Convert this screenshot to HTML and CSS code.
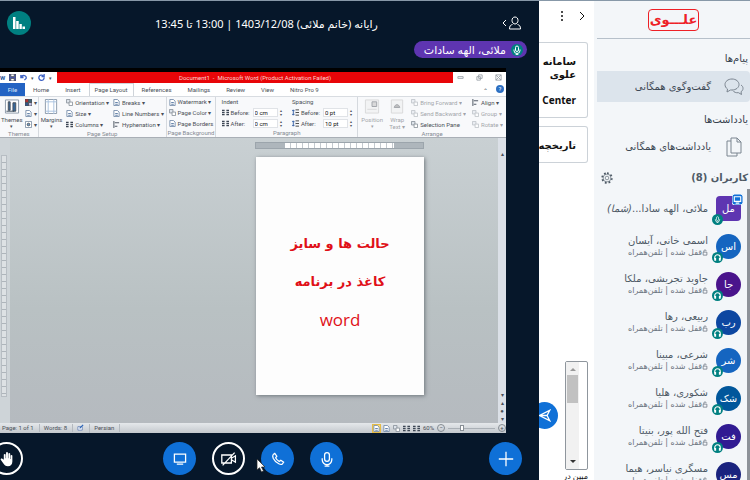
FILE: index.html
```
<!DOCTYPE html>
<html lang="fa" dir="rtl">
<head>
  <meta charset="UTF-8" />
  <title>رایانه (خانم ملائی)</title>
  <meta name="viewport" content="width=device-width, initial-scale=1.0" />
  <link rel="stylesheet" href="styles.css">
</head>
<body>
  <!-- shared icons -->
  <svg class="defs" aria-hidden="true">
    <symbol id="headset" viewBox="0 0 12 12"><path d="M3 8V6a3 3 0 0 1 6 0v2" fill="none" stroke="#fff" stroke-width="1.200"/><path d="M2.500 6.500h2V9.500h-2zM7.500 6.500h2V9.500h-2z" fill="#fff" stroke="none"/></symbol>
    <symbol id="mic" viewBox="0 0 20 20"><rect x="7" y="2" width="6" height="11" rx="3"/><path d="M4 9v2a6 6 0 0 0 12 0V9M10 17v2M7 19h6"/></symbol>
    <symbol id="doc" viewBox="0 0 8 8"><path d="M1 .5h4l2 2v5H1z" fill="#fff" stroke="#7189a8"/><path d="M2.500 4h3M2.500 6h3" stroke="#52749f"/></symbol>
    <symbol id="lines" viewBox="0 0 8 8"><path d="M0 1.500h3M0 4h3M0 6.500h3M5 1.500h3M5 4h3M5 6.500h3" stroke="#3c4654" stroke-width="1.500"/></symbol>
    <symbol id="para" viewBox="0 0 8 8"><path d="M1.500 1v6M0 2.500 1.500 1 3 2.500M0 5.500 1.500 7 3 5.500" fill="none" stroke="#2c58a0"/><path d="M4 1h4M4 4h4M4 7h4" stroke="#333"/></symbol>
    <symbol id="layers" viewBox="0 0 8 8"><path d="M.5.5h4v4h-4z" fill="#dde3ea" stroke="#8a929c"/><path d="M3.500 3.500h4v4h-4z" fill="#fff" stroke="#8a929c"/></symbol>
    <symbol id="align" viewBox="0 0 8 8"><path d="M1 0v8M2 2h5M2 6h3" fill="none" stroke="#3c4654"/></symbol>
    <symbol id="lock" viewBox="0 0 8 8"><path d="M1.500 3.500h5v4h-5zM2.500 3.500V2a1.500 1.500 0 0 1 3 0" fill="none" stroke="#6b7480"/></symbol>
  </svg>

  <div class="app">
    <aside class="users-panel">
      <div class="brand"><span class="logo">علـــوی</span></div>

      <h2>پیام‌ها</h2>
      <button class="nav-item active">
        <svg viewBox="0 0 20 20"><path d="M8 2c-4 0-7 2.500-7 5.500 0 2 1 3.500 2.500 4.500L3 15l3.500-2H8c4 0 7-2.500 7-5.500S12 2 8 2z"/><path d="M17 8c1.500 1 2 2 2 3.500s-.8 2.500-2 3.200l.5 2.800-3-1.800c-2.500.3-4.500-.5-5.500-2"/></svg>
        <span>گفت‌وگوی همگانی</span>
      </button>

      <h2>یادداشت‌ها</h2>
      <button class="nav-item">
        <svg viewBox="0 0 20 20"><path d="M7 1h6l4 4v11H7zM13 1v4h4M7 4H3v15h10v-3"/></svg>
        <span>یادداشت‌های همگانی</span>
      </button>

      <div class="users-head">
        <h2>کاربران (8)</h2>
        <button class="icon-btn" aria-label="تنظیمات کاربران">
          <svg viewBox="0 0 20 20"><circle cx="10" cy="10" r="3"/><circle cx="10" cy="10" r="6.500"/><path stroke-width="3" stroke-dasharray="3 3.280" d="M10 2a8 8 0 1 1 0 16 8 8 0 0 1 0-16"/></svg>
        </button>
      </div>

      <div class="users">
        <ul class="user-list">
          <li>
            <span class="avatar me">مل
              <svg class="screen-badge" viewBox="0 0 12 12"><rect width="12" height="12" rx="3" fill="#0f70d7"/><path d="M2.500 3h7v5h-7zM4 10h4" fill="none" stroke="#fff" stroke-width="1.200"/></svg>
              <svg class="badge badge-mic"><use href="#mic"/></svg></span>
            <p class="name">ملائی، الهه سادا...<i>(شما)</i></p>
          </li>
          <li>
            <span class="avatar c1">اس<svg class="badge"><use href="#headset"/></svg></span>
            <div><p class="name">اسمی خانی، آیسان</p><p class="state"><svg><use href="#lock"/></svg>قفل شده | تلفن‌همراه</p></div>
          </li>
          <li>
            <span class="avatar c2">جا<svg class="badge"><use href="#headset"/></svg></span>
            <div><p class="name">جاوید تجریشی، ملکا</p><p class="state"><svg><use href="#lock"/></svg>قفل شده | تلفن‌همراه</p></div>
          </li>
          <li>
            <span class="avatar c3">رب<svg class="badge"><use href="#headset"/></svg></span>
            <div><p class="name">ربیعی، رها</p><p class="state"><svg><use href="#lock"/></svg>قفل شده | تلفن‌همراه</p></div>
          </li>
          <li>
            <span class="avatar c1">شر<svg class="badge"><use href="#headset"/></svg></span>
            <div><p class="name">شرعی، مبینا</p><p class="state"><svg><use href="#lock"/></svg>قفل شده | تلفن‌همراه</p></div>
          </li>
          <li>
            <span class="avatar c4">شک<svg class="badge"><use href="#headset"/></svg></span>
            <div><p class="name">شکوری، هلیا</p><p class="state"><svg><use href="#lock"/></svg>قفل شده | تلفن‌همراه</p></div>
          </li>
          <li>
            <span class="avatar c5">فت<svg class="badge"><use href="#headset"/></svg></span>
            <div><p class="name">فتح الله پور، بنیتا</p><p class="state"><svg><use href="#lock"/></svg>قفل شده | تلفن‌همراه</p></div>
          </li>
          <li>
            <span class="avatar c6">مس<svg class="badge"><use href="#headset"/></svg></span>
            <div><p class="name">مسگری نیاسر، هیما</p><p class="state"><svg><use href="#lock"/></svg>قفل شده | تلفن‌همراه</p></div>
          </li>
        </ul>
        <div class="users-scroll"></div>
      </div>
    </aside>

    <section class="chat">
      <div class="chat-head">
        <button class="icon-btn" aria-label="بستن گفت‌وگو"><svg viewBox="0 0 12 12"><path d="m4 2 4 4-4 4"/></svg></button>
        <button class="icon-btn dots" aria-label="گزینه‌ها"><svg viewBox="0 0 12 12"><circle cx="6" cy="2" r="1"/><circle cx="6" cy="6" r="1"/><circle cx="6" cy="10" r="1"/></svg></button>
      </div>
      <div class="message">سامانه<br>علوی<br><br>Center</div>
      <div class="message">تاریخچه</div>
      <form class="chat-form">
        <div class="field">
          <textarea aria-label="پیام"></textarea>
          <div class="field-scroll"><i class="up"></i><b></b><i class="down"></i></div>
        </div>
        <button type="button" class="send" aria-label="ارسال"><svg viewBox="0 0 20 20"><path d="M18 2 2 10l16 8-4-8zM14 10H2"/></svg></button>
      </form>
      <p class="typing">مبین در</p>
    </section>

    <main class="media" dir="ltr">
      <header class="room-head">
        <button class="stats" aria-label="وضعیت اتصال"><svg viewBox="0 0 12 12"><path d="M0 0h2.500v12H0zM3.200 4h2.500v8H3.200zM6.400 7h2.400v5H6.400zM9.500 9.500H12V12H9.500z"/></svg></button>
        <h1 dir="rtl">رایانه (خانم ملائی) 1403/12/08 | 13:00 تا 13:45</h1>
        <button class="toggle-users" aria-label="کاربران"><svg viewBox="0 0 20 14"><path d="M4 4 1 7l3 3M13 1c-2 0-3 1.500-3 3.500S11.500 8 13 8s3-1.500 3-3.500S15 1 13 1zM10.500 8.500C8.500 9 7.500 10 7.500 13h11c0-3-1-4-3-4.500"/></svg></button>
      </header>
      <div class="talking"><span dir="rtl"><svg class="talk-mic"><use href="#mic"/></svg>ملائی، الهه سادات</span></div>

      <section class="word">
        <div class="titlebar">
          <div class="quick">
            <b class="w-icon">W</b>
            <svg viewBox="0 0 8 8"><path d="M0 0h8v8H0z" fill="#4a58b5"/><path d="M2 0h4v3H2zM2 5h4v3H2z" fill="#fff"/></svg>
            <svg viewBox="0 0 8 8"><path d="M1 1v3h3M1 4c2-4 7-2 6 1L5 7" fill="none" stroke="#3f63c4" stroke-width="1.500"/></svg>
            <small>▾</small>
            <svg viewBox="0 0 8 8"><path d="M7 4a3 3 0 1 1-1-2M7 0v3H4" fill="none" stroke="#3f63c4" stroke-width="1.500"/></svg>
            <small>▾</small>
          </div>
          <div class="doc-title">Document1 &nbsp;-&nbsp; Microsoft Word (Product Activation Failed)</div>
          <div class="win-btns">
            <svg viewBox="0 0 8 8"><path d="M1 3h6v2H1z"/></svg>
            <svg viewBox="0 0 8 8"><path d="M3 1h4v4H3zM1 3h4v4H1z"/></svg>
            <svg viewBox="0 0 8 8"><path d="M1 1h6v6H1zM1 1l6 6M7 1 1 7"/></svg>
          </div>
        </div>
        <nav class="tabs">
          <button class="file">File</button>
          <button>Home</button>
          <button>Insert</button>
          <button class="current">Page Layout</button>
          <button>References</button>
          <button>Mailings</button>
          <button>Review</button>
          <button>View</button>
          <button>Nitro Pro 9</button>
          <span class="collapse">⌃</span><span class="help">?</span>
        </nav>

        <div class="ribbon">
          <div class="group themes">
            <div class="tools">
              <button class="big"><svg viewBox="0 0 16 16"><path d="M1 1h14v14H1z" fill="#fff" stroke="#8a98a8"/><path d="M4 3h2v9H4zM9 4h3v9H9z" fill="#36699e"/><path d="M2 13h8" stroke="#345"/></svg>Themes<small>▾</small></button>
              <div class="col">
                <button><svg viewBox="0 0 8 8" stroke="none"><path d="M0 0h4v4H0z" fill="#a33"/><path d="M4 0h4v4H4z" fill="#467"/><path d="M0 4h4v4H0z" fill="#358"/><path d="M4 4h4v4H4z" fill="#bbd"/></svg>▾</button>
                <button><svg><use href="#doc"/></svg>▾</button>
                <button><svg viewBox="0 0 8 8"><path d="M.5.5h7v7h-7z" fill="#fff" stroke="#7d8fa5"/><circle cx="4" cy="4" r="1.500" fill="#6e9bc7"/></svg>▾</button>
              </div>
            </div>
            <div class="caption">Themes</div>
          </div>
          <div class="group setup">
            <div class="tools">
              <button class="big"><svg viewBox="0 0 16 16"><path d="M2 .5h12v15H2z" fill="#fff" stroke="#8a98a8"/><path d="M5 0v16M11 0v16M2 3h12M2 13h12" stroke="#a9c1df"/></svg>Margins<small>▾</small></button>
              <div class="col">
                <button><svg><use href="#layers"/></svg>Orientation ▾</button>
                <button><svg><use href="#doc"/></svg>Size ▾</button>
                <button><svg><use href="#lines"/></svg>Columns ▾</button>
              </div>
              <div class="col">
                <button><svg><use href="#doc"/></svg>Breaks ▾</button>
                <button><svg><use href="#doc"/></svg>Line Numbers ▾</button>
                <button><svg><use href="#align"/></svg>Hyphenation ▾</button>
              </div>
            </div>
            <div class="caption">Page Setup</div>
          </div>
          <div class="group background">
            <div class="tools">
              <div class="col">
                <button><svg><use href="#doc"/></svg>Watermark ▾</button>
                <button><svg><use href="#layers"/></svg>Page Color ▾</button>
                <button><svg><use href="#doc"/></svg>Page Borders</button>
              </div>
            </div>
            <div class="caption">Page Background</div>
          </div>
          <div class="group paragraph">
            <div class="tools">
              <div class="col">
                <span>Indent</span>
                <label><svg><use href="#lines"/></svg><em>Before:</em><input value="0 cm"><i>▴<br>▾</i></label>
                <label><svg><use href="#lines"/></svg><em>After:</em><input value="0 cm"><i>▴<br>▾</i></label>
              </div>
              <div class="col">
                <span>Spacing</span>
                <label><svg><use href="#para"/></svg><em>Before:</em><input value="0 pt"><i>▴<br>▾</i></label>
                <label><svg><use href="#para"/></svg><em>After:</em><input value="10 pt"><i>▴<br>▾</i></label>
              </div>
            </div>
            <div class="caption">Paragraph</div>
          </div>
          <div class="group arrange">
            <div class="tools">
              <button class="big off"><svg viewBox="0 0 16 16"><path d="M1 1h14v14H1z" fill="#eee" stroke="#bbb"/><path d="M8 3h5v5H8z" fill="#bbb"/><path d="M3 11h10" stroke="#bbb"/></svg>Position<small>▾</small></button>
              <button class="big off"><svg viewBox="0 0 16 16"><path d="M2 1h12v14H2z" fill="#eee" stroke="#bbb"/><path d="M5 9c1-4 5-4 6 0z" fill="#888"/></svg>Wrap<br>Text ▾</button>
              <div class="col">
                <button class="off"><svg><use href="#layers"/></svg>Bring Forward ▾</button>
                <button class="off"><svg><use href="#layers"/></svg>Send Backward ▾</button>
                <button><svg><use href="#layers"/></svg>Selection Pane</button>
              </div>
              <div class="col">
                <button><svg><use href="#align"/></svg>Align ▾</button>
                <button class="off"><svg><use href="#layers"/></svg>Group ▾</button>
                <button class="off"><svg><use href="#layers"/></svg>Rotate ▾</button>
              </div>
            </div>
            <div class="caption">Arrange</div>
          </div>
        </div>

        <div class="workspace">
          <div class="ruler-v"><b></b></div>
          <div class="canvas">
            <div class="ruler-h"><b></b></div>
            <article class="page" dir="rtl">
              <p>حالت ها و سایز</p>
              <p>کاغذ در برنامه</p>
              <p class="latin">word</p>
            </article>
          </div>
          <div class="doc-scroll"><span>▴</span><span class="end">▾</span><span>▴</span><span>●</span><span>▾</span></div>
        </div>

        <div class="statusbar">
          <span>Page: 1 of 1</span><span>Words: 8</span>
          <span><svg viewBox="0 0 8 8"><path d="M1 3h5v4H1z" fill="#fff" stroke="#6b86b8"/><path d="m3 5 4-4" stroke="#2b64b8" stroke-width="1.500"/></svg></span>
          <span>Persian</span>
          <div class="views">
            <svg class="on"><use href="#doc"/></svg><svg><use href="#doc"/></svg><svg><use href="#layers"/></svg><svg><use href="#lines"/></svg><svg><use href="#lines"/></svg>
            <em>60%</em>
            <button aria-label="Zoom out">−</button><div class="zoom"><b></b></div><button aria-label="Zoom in">+</button>
          </div>
        </div>
      </section>

      <footer class="actions">
        <button class="round outline hand" aria-label="بالا بردن دست"><svg viewBox="0 0 20 20"><path fill="#fff" stroke="none" d="M6 11V4.500a1.200 1.200 0 0 1 2.300 0V9h.5V2.500a1.200 1.200 0 0 1 2.400 0V9h.5V3.500a1.200 1.200 0 0 1 2.300 0V10h.5V6a1.100 1.100 0 0 1 2.200 0v7c0 4-2.200 6-5.500 6-3 0-4.500-1.500-5.700-3.500L2.200 11c-.7-1.300 1-2.300 2-1.200z"/></svg></button>
        <div class="center">
          <button class="round" aria-label="نمایش صفحه"><svg viewBox="0 0 20 20"><path d="M3 4h14v10H3zM6 16.500h8"/></svg></button>
          <button class="round outline" aria-label="دوربین"><svg viewBox="0 0 20 20"><path d="M1 5h12v10H1zM13 9l5-3v8l-5-3M2 18 17 2"/></svg></button>
          <button class="round" aria-label="صدا"><svg viewBox="0 0 20 20"><path d="M4 4.500 6 3l2.500 3.500L7 8.500c1 2 2.500 3.500 4.500 4.500l2-1.500L17 14l-1.500 2c-1 1.200-2.500 1-4.500 0-3-1.500-5.500-4-7-7-.7-1.800-1-3.500 0-4.500z"/></svg></button>
          <button class="round" aria-label="میکروفون"><svg><use href="#mic"/></svg></button>
        </div>
        <button class="round" aria-label="افزودن"><svg viewBox="0 0 20 20"><path d="M10 1v18M1 10h18"/></svg></button>
        <svg class="cursor" viewBox="0 0 10 15"><path d="M1 1v11l2.500-2.300L5.500 14l2-1-2-4H9z" fill="#fff" stroke="#222" stroke-width=".7"/></svg>
      </footer>
    </main>
  </div>
</body>
</html>
```
FILE: styles.css
```
* {
  box-sizing: border-box;
}
body {
  margin: 0;
  font-family: "Noto Sans", "DejaVu Sans", sans-serif;
  font-size: 10px;
  color: #4e5a66;
  background: #fff;
}
h1, h2, p, ul {
  margin: 0;
  padding: 0;
}
button, input, textarea {
  font: inherit;
  color: inherit;
  border: 0;
  padding: 0;
  background: none;
}
svg {
  flex: none;
  fill: none;
  stroke: currentColor;
}
.defs {
  position: absolute;
  width: 0;
  height: 0;
}
.app {
  display: flex;
  height: 100vh;
  overflow: hidden;
  border-top: 1px solid #8798a8;
}

/* users */
.users-panel {
  flex: 0 0 156px;
  display: flex;
  flex-direction: column;
  background: #f3f6f9;
  font-family: "DejaVu Sans", sans-serif;
}
.brand {
  height: 38px;
  margin-left: 3px;
  display: flex;
  justify-content: center;
  align-items: center;
  border-bottom: 1px solid #b6c0ca;
}
.logo {
  display: flex;
  align-items: center;
  height: 22px;
  padding: 0 1px;
  border: 1px solid #ee2026;
  border-radius: 4px;
  color: #ee2026;
  font-size: 13px;
  font-weight: bold;
  line-height: 16px;
}
h2 {
  font-size: 10px;
  font-weight: bold;
  line-height: 14px;
  padding-right: 2px;
}
.users-panel > h2 {
  font-weight: normal;
  margin: 13px 0 5px;
  color: #36424e;
}
.nav-item {
  display: flex;
  align-items: center;
  gap: 13px;
  height: 31px;
  margin-left: 3px;
  padding-right: 6px;
  border-radius: 0 4px 4px 0;
  color: #3c4854;
}
.nav-item svg {
  width: 20px;
  height: 20px;
  color: #7b8590;
}
.nav-item.active {
  background: #dce4ec;
}
.users-panel > .nav-item.active + h2 {
  margin: 11px 0 4px;
}
.users-head {
  display: flex;
  justify-content: space-between;
  align-items: center;
  padding: 9px 0 0 7px;
}
.icon-btn svg {
  display: block;
  width: 12px;
  height: 12px;
}
.users {
  flex: 1;
  display: flex;
  min-height: 0;
  padding-top: 4px;
}
.user-list {
  flex: 1;
  order: 2;
  list-style: none;
  overflow: hidden;
}
.user-list li {
  display: flex;
  align-items: center;
  gap: 8px;
  height: 38px;
  padding-right: 6px;
  white-space: nowrap;
}
.avatar {
  position: relative;
  flex: none;
  width: 25px;
  height: 25px;
  border-radius: 50%;
  color: #fff;
  font-size: 10px;
  line-height: 25px;
  text-align: center;
}
.me { background: #5e35b1; border-radius: 4px; }
.c1 { background: #1565c0; }
.c2 { background: #4a148c; }
.c3 { background: #0d47a1; }
.c4 { background: #01579b; }
.c5 { background: #311b92; }
.c6 { background: #1a237e; }
.badge {
  position: absolute;
  left: -4px;
  bottom: -4px;
  width: 11px;
  height: 11px;
  border-radius: 50%;
  background: #008081;
}
.badge-mic {
  padding: 2px;
  stroke-width: 2;
}
.screen-badge {
  position: absolute;
  right: -2px;
  top: -2px;
  width: 11px;
  height: 11px;
}
.name {
  font-size: 10px;
  line-height: 13px;
}
.state {
  display: flex;
  align-items: center;
  font-size: 8px;
  line-height: 11px;
  color: #6b7480;
}
.state svg {
  width: 6px;
  height: 7px;
}
.users-scroll {
  width: 3px;
  background: #8d9299;
}

/* chat */
.chat {
  flex: 0 0 55px;
  display: flex;
  flex-direction: column;
  overflow: hidden;
  padding-right: 6px;
  color: #111;
}
.chat-head {
  display: flex;
  gap: 8px;
  padding: 9px 0 20px;
}
.dots svg {
  fill: currentColor;
  stroke: none;
}
.message {
  margin-bottom: 8px;
  padding: 12px 11px 10px 0;
  border: 1px solid #ccd2d8;
  border-left: 0;
  border-radius: 0 3px 3px 0;
  font-size: 10px;
  font-weight: bold;
  line-height: 13px;
  white-space: nowrap;
}
.chat-form {
  display: flex;
  align-items: center;
  gap: 7px;
  margin-top: auto;
}
.field {
  flex: 0 0 23px;
  display: flex;
  height: 109px;
  border: 1px solid #8f969d;
  border-radius: 2px;
}
.field textarea {
  width: 8px;
  resize: none;
  outline: none;
}
.field-scroll {
  flex: 1;
  display: flex;
  flex-direction: column;
  align-items: center;
  padding: 6px 1px;
  background: #f1f1f1;
}
.field-scroll b {
  width: 11px;
  height: 28px;
  margin: 4px 0 auto;
  background: #c1c1c1;
}
.up, .down {
  border: 3px solid transparent;
}
.up {
  border-top: 0;
  border-bottom-color: #999;
}
.down {
  border-bottom: 0;
  border-top-color: #333;
}
.send {
  flex: 0 0 27px;
  height: 27px;
  display: grid;
  place-items: center;
  border-radius: 50%;
  background: #0f70d7;
  color: #fff;
}
.send svg {
  width: 13px;
  height: 13px;
  stroke-width: 2;
}
.typing {
  height: 10px;
  overflow: hidden;
  font-size: 8px;
  line-height: 12px;
  white-space: nowrap;
}

/* media */
.media {
  flex: 1;
  min-width: 0;
  display: flex;
  flex-direction: column;
  background: #06172a;
  color: #fff;
}
.room-head {
  display: flex;
  align-items: center;
  justify-content: space-between;
  height: 40px;
  padding: 4px 17px 0 7px;
}
.room-head h1 {
  font-size: 11px;
  font-weight: normal;
  white-space: nowrap;
}
.stats {
  display: grid;
  place-items: center;
  width: 24px;
  height: 24px;
  border-radius: 50%;
  background: #008081;
}
.stats svg {
  width: 12px;
  height: 12px;
  fill: #fff;
  stroke: none;
}
.toggle-users svg {
  display: block;
  width: 20px;
  height: 14px;
}
.talking {
  display: flex;
  justify-content: flex-end;
  height: 27px;
  padding-right: 12px;
}
.talking span {
  display: flex;
  align-items: center;
  gap: 5px;
  height: 17px;
  padding: 0 4px 0 10px;
  border-radius: 9px;
  background: #5e35b1;
  font-size: 11px;
}
.talk-mic {
  width: 12px;
  height: 12px;
  padding: 1px;
  border-radius: 50%;
  background: #008081;
  stroke-width: 2;
}

/* shared word window */
.word {
  flex: 1;
  min-height: 0;
  display: flex;
  flex-direction: column;
  margin-right: 33px;
  border-top: 4px solid #000;
  background: #fff;
  color: #4a4f57;
  font-family: Roboto, sans-serif;
  font-size: 6px;
  line-height: 8px;
}
.word svg {
  width: 7px;
  height: 7px;
}
.word button {
  white-space: nowrap;
}
.titlebar {
  display: flex;
  height: 11px;
}
.quick, .win-btns {
  display: flex;
  align-items: center;
  flex: 0 0 57px;
  gap: 4px;
}
.w-icon {
  color: #2a5699;
}
.doc-title {
  flex: 1;
  background: #e80508;
  color: #ffd5d0;
  text-align: center;
  line-height: 12px;
}
.win-btns {
  flex: 0 0 53px;
  justify-content: space-around;
  color: #9aa1a8;
}
.tabs {
  display: flex;
  align-items: stretch;
  height: 13px;
}
.tabs button {
  padding: 0 8px;
}
.tabs .file {
  width: 25px;
  padding: 0;
  background: #2363c3;
  color: #dbe8fa;
}
.tabs .current {
  padding: 0 5px;
  border: 1px solid #cfd4da;
  border-bottom: 0;
}
.collapse {
  margin-left: auto;
  line-height: 15px;
}
.help {
  width: 8px;
  height: 8px;
  margin: 2px 2px 0 8px;
  border-radius: 50%;
  background: #2d6fc2;
  color: #fff;
  text-align: center;
}
.ribbon {
  display: flex;
  height: 42px;
  background: #f8f9fb;
  border-top: 1px solid #d8dce1;
  border-bottom: 1px solid #a9afb6;
}
.group {
  display: flex;
  flex-direction: column;
  border-right: 1px solid #d5d9de;
}
.themes { flex: 38; }
.setup { flex: 128; }
.background { flex: 49; }
.paragraph { flex: 142; }
.arrange { flex: 149; border: 0; }
.tools {
  flex: 1;
  display: flex;
  justify-content: space-around;
}
.col {
  display: flex;
  flex-direction: column;
  justify-content: space-around;
}
.col button, .col label {
  display: flex;
  align-items: center;
  gap: 2px;
}
.big {
  display: flex;
  flex-direction: column;
  align-items: center;
  padding-top: 2px;
  line-height: 7px;
}
.word .big svg {
  width: 16px;
  height: 15px;
  margin-bottom: 2px;
}
.big small {
  font-size: 5px;
}
.off {
  opacity: .5;
}
.caption {
  text-align: center;
  line-height: 8px;
  color: #858b93;
}
.col label em {
  width: 20px;
  font-style: normal;
}
.col label i {
  font-size: 4px;
  font-style: normal;
  line-height: 4px;
}
.col input {
  width: 25px;
  height: 9px;
  padding-left: 1px;
  border: 1px solid #e0e3e7;
  background: #fff;
  color: #111;
}
.workspace {
  flex: 1;
  min-height: 0;
  display: flex;
  background: linear-gradient(#c9d0d3, #b9c1c3 60%, #b5babf);
}
.ruler-v {
  flex: 0 0 10px;
  padding: 17px 3px 26px 1px;
  background: #ced4d8;
}
.ruler-v b {
  display: block;
  height: 100%;
  border: 1px solid #b7bdc3;
  background: repeating-linear-gradient(#dde1e4 0 6px, #aeb5bb 6px 7px);
}
.canvas {
  flex: 1;
  display: flex;
  flex-direction: column;
  align-items: flex-end;
  padding: 4px 74px 0 0;
}
.ruler-h {
  width: 169px;
  height: 7px;
  margin-bottom: 8px;
  padding: 0 29px;
  border: 1px solid #9ca5ac;
  background: #aeb6bc;
}
.ruler-h b {
  display: block;
  height: 5px;
  background: repeating-linear-gradient(90deg, #fff 0 5px, #c4cacf 5px 6px);
}
.page {
  width: 168px;
  height: 238px;
  padding-top: 68px;
  background: #fdfdfd;
  box-shadow: 1px 1px 4px #70777c;
  color: #e01018;
  text-align: center;
  font-family: "DejaVu Sans", sans-serif;
  font-size: 13px;
  font-weight: bold;
  line-height: 38px;
}
.page .latin {
  font-family: "Open Sans", sans-serif;
  font-size: 17px;
  font-weight: normal;
}
.doc-scroll {
  flex: 0 0 8px;
  display: flex;
  flex-direction: column;
  align-items: center;
  padding-top: 12px;
  background: #dbe0e7;
}
.doc-scroll .end {
  margin-top: auto;
}
.statusbar {
  display: flex;
  align-items: center;
  height: 10px;
  background: linear-gradient(#e5e8eb, #c3c8cd);
}
.statusbar > span {
  padding: 0 5px 0 2px;
  margin-right: 2px;
  border-right: 1px solid #b4b9bf;
}
.views {
  flex: 0 0 133px;
  margin-left: auto;
  display: flex;
  align-items: center;
  gap: 3px;
}
.views em {
  font-style: normal;
}
.views .on {
  outline: 1px solid #e5bb47;
  background: #f8d873;
}
.views button {
  width: 8px;
  height: 8px;
  border: 1px solid #858c93;
  border-radius: 50%;
  line-height: 6px;
}
.zoom {
  flex: 1;
  height: 1px;
  background: #aab0b6;
}
.zoom b {
  display: block;
  width: 4px;
  height: 6px;
  margin: -3px auto 0 12px;
  border: 1px solid #888f96;
  background: #fff;
}

/* action bar */
.actions {
  position: relative;
  display: flex;
  align-items: center;
  justify-content: space-between;
  height: 47px;
  padding: 4px 17px 0 0;
}
.center {
  display: flex;
  gap: 16px;
  margin-right: 6px;
}
.round {
  display: grid;
  place-items: center;
  width: 33px;
  height: 33px;
  border-radius: 50%;
  background: #0f70d7;
  color: #fff;
}
.round svg {
  width: 16px;
  height: 16px;
  stroke-width: 1.6;
}
.outline {
  border: 2px solid #fff;
  background: none;
}
.hand {
  margin-left: -10px;
}
.cursor {
  position: absolute;
  left: 256px;
  top: 25px;
  width: 10px;
  height: 15px;
}
```
